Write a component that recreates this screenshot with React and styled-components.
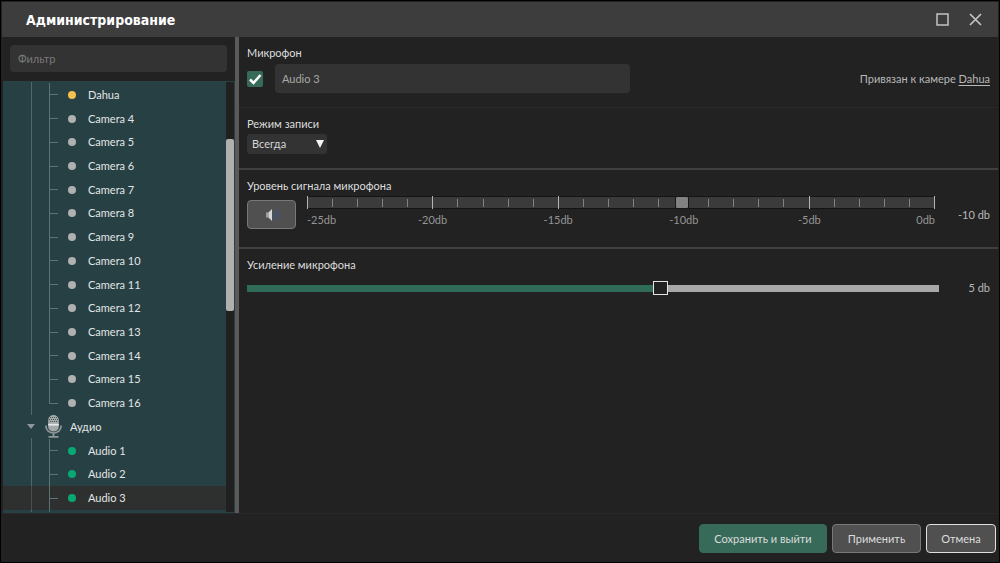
import React, { useState } from "react";
import styled, { createGlobalStyle } from "styled-components";

const GlobalStyle = createGlobalStyle`
  *, *::before, *::after { box-sizing: border-box; }
  body {
    margin: 0;
    background: #222222;
    color: #d6d6d6;
    font: 11px/16px Lato, "Open Sans", sans-serif;
  }
  button, input, select { font: inherit; color: inherit; margin: 0; }
`;

const Window = styled.div`
  display: flex;
  flex-direction: column;
  min-height: 100vh;
  padding: 1px;
  border: 1px solid #000000;
`;

const TitleBar = styled.header`
  display: flex;
  align-items: center;
  height: 35px;
  padding: 0 15px 0 24px;
  background: #3d3d3d;
`;

const Title = styled.h1`
  flex: 1;
  margin: 0;
  color: #ffffff;
  font: bold 14px/20px "DejaVu Sans Condensed", "Open Sans", sans-serif;
`;

const WindowButton = styled.button`
  display: flex;
  align-items: center;
  justify-content: center;
  width: 14px;
  height: 14px;
  margin-left: 19px;
  padding: 0;
  border: 0;
  background: none;
`;

const Body = styled.div`
  display: flex;
  flex: 1;
`;

const Sidebar = styled.aside`
  display: flex;
  flex-direction: column;
  width: 237px;
  border-right: 4px solid #5a5a5a;
`;

const Filter = styled.input`
  height: 27px;
  margin: 8px 8px 9px;
  padding: 0 8px;
  border: 0;
  border-radius: 4px;
  background: #333333;
  &::placeholder { color: #7a7a7a; opacity: 1; }
`;

const TreeFrame = styled.div`
  display: flex;
  flex: 1;
  margin-left: 1px;
  padding: 1px 1px 1px 0;
  background: #274044;
`;

const TreeList = styled.ul`
  display: flex;
  flex-direction: column;
  flex: 1;
  margin: 0;
  padding: 1px 0 2px;
  list-style: none;
  background:
    linear-gradient(#4f686b, #4f686b) 28px 0 / 1px 100% no-repeat,
    linear-gradient(#4f686b, #4f686b) 46px 100% / 1px 3px no-repeat;
`;

const TreeItem = styled.li`
  display: flex;
  flex: 1 0 20px;
  align-items: center;
  background: ${(p) =>
    p.$selected ? "linear-gradient(#4a4f4d, #4a4f4d) 28px 0 / 1px 100% no-repeat, #2d302f" : "none"};
  color: #e2e6e6;
`;

const Branch = styled.span`
  align-self: stretch;
  width: 19px;
  margin-left: 46px;
  background:
    linear-gradient(#5b7375, #5b7375) 0 0 / 1px ${(p) => (p.$last ? "50%" : "100%")} no-repeat,
    linear-gradient(#5b7375, #5b7375) 0 50% / 9px 1px no-repeat;
`;

const Dot = styled.span`
  width: 8px;
  height: 8px;
  margin-right: 12px;
  border-radius: 50%;
  background: ${(p) => p.$color};
`;

const GroupIcons = styled.span`
  display: flex;
  align-items: center;
  gap: 8px;
  margin: 0 8px 0 22px;
  background: #274044;
`;

const ScrollTrack = styled.div`
  width: 8px;
  padding-top: 57px;
  background: #202020;
`;

const ScrollThumb = styled.div`
  height: 172px;
  border-radius: 2px;
  background: #b0b0b0;
`;

const Main = styled.main`
  flex: 1;
  min-width: 0;
`;

const Section = styled.section`
  display: flex;
  flex-direction: column;
  gap: ${(p) => p.$gap};
  height: ${(p) => p.$height};
  padding: 8px 8px 0;
  border-bottom: ${(p) => p.$line || "2px solid #404040"};
`;

const Label = styled.label`
  align-self: flex-start;
  color: #dedede;
`;

const Row = styled.div`
  display: flex;
  align-items: ${(p) => p.$align || "center"};
`;

const CheckWrap = styled.span`
  position: relative;
  width: 16px;
  height: 16px;
  margin-right: 12px;
  svg { position: absolute; inset: 0; pointer-events: none; }
`;

const Check = styled.input`
  display: block;
  width: 16px;
  height: 16px;
  appearance: none;
  border-radius: 2px;
  background: #386a5a;
`;

const NameInput = styled.input`
  flex: 0 1 355px;
  min-width: 0;
  height: 29px;
  padding: 0 7px;
  border: 0;
  border-radius: 4px;
  background: #333333;
  color: #a8a8a8;
`;

const Linked = styled.span`
  margin-left: auto;
  color: #b8b8b8;
  a { color: inherit; text-underline-offset: 2px; }
`;

const SelectWrap = styled.span`
  position: relative;
  width: 80px;
  svg { position: absolute; right: 3px; top: 6px; pointer-events: none; }
`;

const Select = styled.select`
  display: block;
  width: 100%;
  height: 20px;
  padding: 0 5px;
  appearance: none;
  border: 0;
  border-radius: 3px;
  background: #333333;
`;

const Button = styled.button`
  display: flex;
  align-items: center;
  justify-content: center;
  height: 29px;
  width: ${(p) => p.$width};
  padding: 0;
  border: 1px solid ${(p) => p.$border || "#787878"};
  border-radius: 4px;
  background: ${(p) => p.$fill || "#505050"};
  color: #dcdcdc;
`;

const Scale = styled.div`
  flex: 1;
  min-width: 0;
  margin-left: 11px;
`;

const Rail = styled.div`
  position: relative;
  display: flex;
  align-items: center;
  justify-content: space-between;
  height: 13px;
  background: linear-gradient(#141414, #141414) 0 0 / 100% 1px no-repeat,
    linear-gradient(#141414, #141414) 0 12px / 100% 1px no-repeat,
    linear-gradient(#3b3b3b, #3b3b3b) 0 1px / 100% 11px no-repeat;
`;

const Tick = styled.span`
  width: 1px;
  height: ${(p) => (p.$major ? "13px" : "8px")};
  background: ${(p) => (p.$major ? "#b4b4b4" : "#828282")};
`;

const LevelInput = styled.input`
  position: absolute;
  inset: 0;
  width: 100%;
  appearance: none;
  background: none;
  &::-webkit-slider-thumb {
    appearance: none;
    width: 14px;
    height: 13px;
    border: 1px solid #161616;
    border-radius: 2px;
    background: #828282;
  }
`;

const ScaleLabels = styled.div`
  display: flex;
  margin: 3px 0 1px;
  color: #959595;
  span { flex: 2 2 0; text-align: center; }
  span:first-child { flex: 1 1 0; text-align: left; }
  span:last-child { flex: 1 1 0; text-align: right; }
`;

const GainInput = styled.input`
  flex: 1;
  min-width: 0;
  height: 14px;
  appearance: none;
  background: linear-gradient(90deg, #306b5a ${(p) => p.$fill}%, #a8a8a8 ${(p) => p.$fill}%) 0 4px / 100% 7px no-repeat;
  &::-webkit-slider-thumb {
    appearance: none;
    width: 15px;
    height: 14px;
    border: 1px solid #e4e4e4;
    background: #222222;
  }
`;

const Value = styled.output`
  width: ${(p) => p.$width};
  line-height: ${(p) => p.$line || "16px"};
  color: #b8b8b8;
  text-align: right;
`;

const Footer = styled.footer`
  display: flex;
  justify-content: flex-end;
  align-items: flex-start;
  gap: 5px;
  height: 48px;
  padding: 10px 2px 0 8px;
  border-top: 1px solid #292929;
`;

const cameras = [
  "Dahua", "Camera 4", "Camera 5", "Camera 6", "Camera 7", "Camera 8", "Camera 9",
  "Camera 10", "Camera 11", "Camera 12", "Camera 13", "Camera 14", "Camera 15", "Camera 16",
];
const microphones = ["Audio 1", "Audio 2", "Audio 3"];
const marks = ["-25db", "-20db", "-15db", "-10db", "-5db", "0db"];

function Leaf({ name, color, last, selected }) {
  return (
    <TreeItem $selected={selected}>
      <Branch $last={last} />
      <Dot $color={color} />
      {name}
    </TreeItem>
  );
}

function MicIcon() {
  return (
    <svg width="17" height="23" viewBox="0 0 17 23" aria-hidden="true">
      <path d="M1 10.500v1a7.500 6.500 0 0 0 15 0v-1" fill="none" stroke="#8f9797" strokeWidth="1.700" />
      <path d="M8.500 18v3M3.500 21.800h10" stroke="#8f9797" strokeWidth="1.800" fill="none" />
      <path d="M3.200 5a5.300 5 0 0 1 10.600 0v7a5.300 4.500 0 0 1-10.600 0z" fill="#a3a8a8" />
      <path d="M3.200 8.800h10.600v1.800h-10.600z" fill="#e5e8e8" />
      <path d="M5 2.500h7M4 4.500h9M5 6.500h8" stroke="#4b5557" strokeWidth="1" strokeDasharray="1 1" />
    </svg>
  );
}

function SpeakerIcon() {
  return (
    <svg width="16" height="16" viewBox="0 0 16 16" aria-hidden="true">
      <path d="M2 5.500h2.500v5H2z" fill="#9da19e" />
      <path d="M4.500 5.500L8 2v12l-3.500-3.500z" fill="#d4d7d2" />
      <path d="M9.500 5.500q1.500 2.500 0 5M11.500 4q2.500 4 0 8M13 2.500q3.500 5.500 0 11" fill="none" stroke="#3c5587" />
    </svg>
  );
}

export default function App() {
  const [gain, setGain] = useState(5);
  const [level, setLevel] = useState(-10);
  const fill = ((gain + 10) / 25) * 100;
  return (
    <>
      <GlobalStyle />
      <Window>
        <TitleBar>
          <Title>Администрирование</Title>
          <WindowButton aria-label="Развернуть">
            <svg width="14" height="14" fill="none" stroke="#c4c4c4" strokeWidth="1.500">
              <rect x="1" y="1" width="11" height="11" />
            </svg>
          </WindowButton>
          <WindowButton aria-label="Закрыть">
            <svg width="14" height="14" stroke="#c4c4c4" strokeWidth="1.700">
              <path d="M1 1l11 11M12 1L1 12" />
            </svg>
          </WindowButton>
        </TitleBar>
        <Body>
          <Sidebar>
            <Filter placeholder="Фильтр" aria-label="Фильтр" />
            <TreeFrame>
              <TreeList>
                {cameras.map((name, i) => (
                  <Leaf key={name} name={name} color={i ? "#b0b0b0" : "#f5c04e"} last={i === cameras.length - 1} />
                ))}
                <TreeItem>
                  <GroupIcons>
                    <svg width="12" height="23" aria-hidden="true">
                      <path d="M2 9h8l-4 5z" fill="#8c9899" />
                    </svg>
                    <MicIcon />
                  </GroupIcons>
                  Аудио
                </TreeItem>
                {microphones.map((name) => (
                  <Leaf key={name} name={name} color="#08a874" selected={name === "Audio 3"} />
                ))}
              </TreeList>
              <ScrollTrack>
                <ScrollThumb />
              </ScrollTrack>
            </TreeFrame>
          </Sidebar>
          <Main>
            <Section $height="71px" $gap="3px" $line="1px solid #292929">
              <Label htmlFor="name">Микрофон</Label>
              <Row>
                <CheckWrap>
                  <Check type="checkbox" defaultChecked aria-label="Включить микрофон" />
                  <svg width="16" height="16" fill="none" stroke="#ffffff" strokeWidth="2.500">
                    <path d="M3 8.500l3.500 3.500L13.500 4" />
                  </svg>
                </CheckWrap>
                <NameInput id="name" defaultValue="Audio 3" />
                <Linked>
                  Привязан к камере <a href="#dahua">Dahua</a>
                </Linked>
              </Row>
            </Section>
            <Section $height="62px" $gap="2px">
              <Label htmlFor="mode">Режим записи</Label>
              <Row>
                <SelectWrap>
                  <Select id="mode">
                    <option>Всегда</option>
                  </Select>
                  <svg width="8" height="8" aria-hidden="true">
                    <path d="M0 0h8L4 8z" fill="#f4f4f4" />
                  </svg>
                </SelectWrap>
              </Row>
            </Section>
            <Section $height="79px" $gap="2px">
              <Label htmlFor="level">Уровень сигнала микрофона</Label>
              <Row $align="flex-end">
                <Button $width="49px" aria-label="Прослушать">
                  <SpeakerIcon />
                </Button>
                <Scale>
                  <Rail>
                    {Array.from({ length: 26 }, (_, i) => (
                      <Tick key={i} $major={i % 5 === 0} />
                    ))}
                    <LevelInput
                      id="level"
                      type="range"
                      min="-25"
                      max="0"
                      value={level}
                      onChange={(e) => setLevel(Number(e.target.value))}
                    />
                  </Rail>
                  <ScaleLabels>
                    {marks.map((mark) => (
                      <span key={mark}>{mark}</span>
                    ))}
                  </ScaleLabels>
                </Scale>
                <Value $width="55px" $line="28px">{level} db</Value>
              </Row>
            </Section>
            <Section $height="auto" $gap="7px" $line="0">
              <Label htmlFor="gain">Усиление микрофона</Label>
              <Row>
                <GainInput
                  id="gain"
                  type="range"
                  min="-10"
                  max="15"
                  value={gain}
                  $fill={fill}
                  onChange={(e) => setGain(Number(e.target.value))}
                />
                <Value $width="51px">{gain} db</Value>
              </Row>
            </Section>
          </Main>
        </Body>
        <Footer>
          <Button $width="128px" $fill="#386a5a" $border="#386a5a">Сохранить и выйти</Button>
          <Button $width="89px">Применить</Button>
          <Button $width="70px" $border="#e0e0e0">Отмена</Button>
        </Footer>
      </Window>
    </>
  );
}
